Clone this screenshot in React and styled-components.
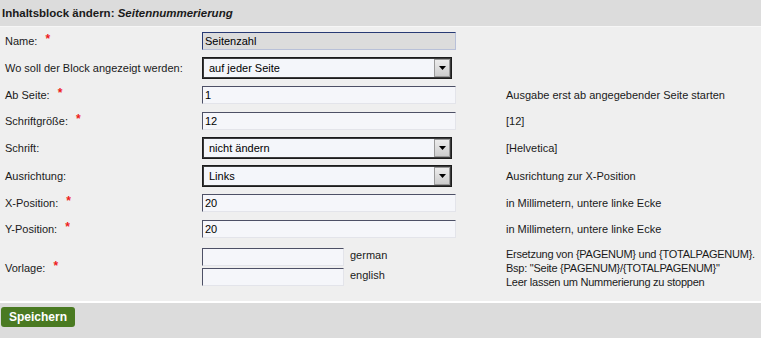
import styled, { createGlobalStyle } from "styled-components";

const GlobalStyle = createGlobalStyle`
  html, body {
    margin: 0;
    padding: 0;
    background: #efefef;
  }
  body {
    font-family: "Liberation Sans", Arial, sans-serif;
    font-size: 11px;
    color: #1a1a1a;
  }
`;

const rows = [
  { label: "Name:", required: true, kind: "name", value: "Seitenzahl" },
  { label: "Wo soll der Block angezeigt werden:", kind: "select", value: "auf jeder Seite" },
  { label: "Ab Seite:", required: true, kind: "input", value: "1", hint: "Ausgabe erst ab angegebender Seite starten" },
  { label: "Schriftgröße:", required: true, kind: "input", value: "12", hint: "[12]" },
  { label: "Schrift:", kind: "select", value: "nicht ändern", hint: "[Helvetica]" },
  { label: "Ausrichtung:", kind: "select", value: "Links", hint: "Ausrichtung zur X-Position" },
  { label: "X-Position:", required: true, kind: "input", value: "20", hint: "in Millimetern, untere linke Ecke" },
  { label: "Y-Position:", required: true, kind: "input", value: "20", hint: "in Millimetern, untere linke Ecke" },
];

function App() {
  return (
    <>
      <GlobalStyle />
      <Page>
        <Header>
          Inhaltsblock ändern: <em>Seitennummerierung</em>
        </Header>
        <Form>
          {rows.map((row, idx) => (
            <Row key={idx} $first={idx === 0} $select={row.kind === "select"}>
              <Label>
                {row.label}
                {row.required && <Star>*</Star>}
              </Label>
              <Field>
                {row.kind === "select" ? (
                  <Select>
                    <span>{row.value}</span>
                    <ArrowButton>
                      <svg width="7" height="4" viewBox="0 0 7 4">
                        <path d="M0 0 L7 0 L3.5 4 Z" fill="#000" />
                      </svg>
                    </ArrowButton>
                  </Select>
                ) : (
                  <TextBox $disabled={row.kind === "name"}>{row.value}</TextBox>
                )}
              </Field>
              <Hint>{row.hint}</Hint>
            </Row>
          ))}
          <Row $tall>
            <Label>
              Vorlage:
              <Star>*</Star>
            </Label>
            <Field>
              <LangList>
                <LangRow>
                  <TextBox $small />
                  <span>german</span>
                </LangRow>
                <LangRow>
                  <TextBox $small />
                  <span>english</span>
                </LangRow>
              </LangList>
            </Field>
            <Hint $tight>
              Ersetzung von {"{PAGENUM}"} und {"{TOTALPAGENUM}"}.
              <br />
              Bsp: "Seite {"{PAGENUM}"}/{"{TOTALPAGENUM}"}"
              <br />
              Leer lassen um Nummerierung zu stoppen
            </Hint>
          </Row>
        </Form>
        <Footer>
          <SaveButton>Speichern</SaveButton>
        </Footer>
      </Page>
    </>
  );
}

export default App;

const Page = styled.div`
  width: 761px;
  height: 338px;
  overflow: hidden;
  display: flex;
  flex-direction: column;
`;

const Header = styled.div`
  height: 27px;
  box-sizing: border-box;
  padding: 7px 0 0 2px;
  background: #dcdcdc;
  border-bottom: 1px solid #f6f6f6;
  font-weight: bold;
  font-size: 11.5px;
  color: #1a1a1a;

  & > em {
    font-style: italic;
  }
`;

const Form = styled.div`
  display: flex;
  flex-direction: column;
  border-bottom: 1px solid #ffffff;
  padding-bottom: 7px;
`;

const Row = styled.div`
  display: grid;
  grid-template-columns: 202px 304px 1fr;
  align-items: center;
  height: ${(p) => (p.$tall ? "52px" : p.$select ? "28px" : "26px")};
  margin-top: ${(p) => (p.$first ? "1px" : "0")};
`;

const Label = styled.div`
  padding-left: 5px;
  white-space: nowrap;
`;

const Star = styled.span`
  color: #ee1c1c;
  font-weight: bold;
  font-size: 12px;
  margin-left: 8px;
  position: relative;
  top: -2px;
`;

const Field = styled.div`
  display: flex;
  align-items: center;
`;

const TextBox = styled.div`
  box-sizing: border-box;
  width: ${(p) => (p.$small ? "142px" : "254px")};
  height: 18px;
  padding: 1px 2px;
  line-height: 15px;
  background: ${(p) => (p.$disabled ? "#dcdcdc" : "#f5f6fa")};
  border: 1px solid;
  border-color: ${(p) =>
    p.$disabled
      ? "#283a74 #b8c0d8 #b8c0d8 #283a74"
      : "#4d5066 #e3e4ea #e3e4ea #4d5066"};
  color: #000;
`;

const Select = styled.div`
  box-sizing: border-box;
  width: 250px;
  height: 22px;
  display: flex;
  align-items: center;
  justify-content: space-between;
  padding: 0 1px 0 6px;
  background: #f4f6fa;
  border: 1px solid #1c1c1c;
  box-shadow: inset 0 0 0 1px #3a3a3a;
  color: #000;
`;

const ArrowButton = styled.div`
  box-sizing: border-box;
  width: 16px;
  height: 18px;
  display: flex;
  align-items: center;
  justify-content: center;
  background: linear-gradient(#ececec, #cdcdcd);
  border: 1px solid #9a9a9a;
`;

const Hint = styled.div`
  line-height: 14px;
  white-space: nowrap;
  letter-spacing: ${(p) => (p.$tight ? "-0.25px" : "normal")};
  color: #1a1a1a;
`;

const LangList = styled.div`
  display: flex;
  flex-direction: column;
  gap: 2px;
  margin-top: -3px;
`;

const LangRow = styled.div`
  display: flex;
  align-items: center;
  gap: 6px;

  & > span {
    position: relative;
    top: -2px;
  }
`;

const Footer = styled.div`
  flex: 1;
  background: #dcdcdc;
  border-top: 1px solid #ffffff;
  padding: 4px 0 0 1px;
`;

const SaveButton = styled.button`
  width: 74px;
  height: 20px;
  border: 0;
  border-radius: 3px;
  padding: 0;
  background: #4a7a22;
  color: #ffffff;
  font-family: "Liberation Sans", Arial, sans-serif;
  font-weight: bold;
  font-size: 12px;
  cursor: pointer;
`;
